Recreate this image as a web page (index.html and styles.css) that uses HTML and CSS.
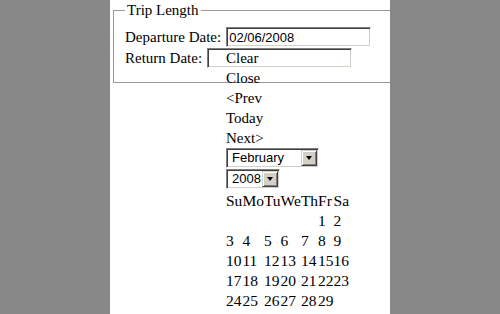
FILE: index.html
```html
<!DOCTYPE html>
<html lang="en">
<head>
<meta charset="utf-8">
<title>Trip Length</title>
<link rel="stylesheet" href="styles.css">
</head>
<body>
<div class="page">
  <form class="trip">
    <fieldset class="trip-fs">
      <legend class="trip-legend">Trip Length</legend>
      <div class="row">
        <label for="dep">Departure Date:</label>
        <input id="dep" class="date-input" type="text" value="02/06/2008">
      </div>
      <div class="row">
        <label for="ret">Return Date:</label>
        <input id="ret" class="date-input" type="text" value="">
      </div>
    </fieldset>
  </form>

  <div class="datepicker">
    <div class="dp-cmd">Clear</div>
    <div class="dp-cmd">Close</div>
    <div class="dp-cmd">&lt;Prev</div>
    <div class="dp-cmd">Today</div>
    <div class="dp-cmd">Next&gt;</div>
    <div class="dp-select month"><span class="dp-value">February</span><span class="dd-btn"></span></div>
    <div class="dp-select year"><span class="dp-value">2008</span><span class="dd-btn"></span></div>
    <table class="cal">
      <thead>
        <tr><td>Su</td><td>Mo</td><td>Tu</td><td>We</td><td>Th</td><td>Fr</td><td>Sa</td></tr>
      </thead>
      <tbody>
        <tr><td></td><td></td><td></td><td></td><td></td><td>1</td><td>2</td></tr>
        <tr><td>3</td><td>4</td><td>5</td><td>6</td><td>7</td><td>8</td><td>9</td></tr>
        <tr><td>10</td><td>11</td><td>12</td><td>13</td><td>14</td><td>15</td><td>16</td></tr>
        <tr><td>17</td><td>18</td><td>19</td><td>20</td><td>21</td><td>22</td><td>23</td></tr>
        <tr><td>24</td><td>25</td><td>26</td><td>27</td><td>28</td><td>29</td><td></td></tr>
      </tbody>
    </table>
  </div>
</div>
</body>
</html>
```
FILE: styles.css
```css
* {
  box-sizing: border-box;
}

html,
body {
  margin: 0;
  padding: 0;
}

body {
  background: #888888;
  color: #000;
  font-family: "Liberation Serif", "Times New Roman", serif;
  font-size: 15px;
  line-height: 20px;
}

.page {
  position: relative;
  width: 280px;
  min-height: 100vh;
  margin: 0 auto;
  background: #fff;
  overflow: hidden;
}

.trip {
  margin: 0;
}

.trip-fs {
  margin: 0 0 0 3px;
  padding: 6px 0 14px 11px;
  border: 1px solid #9a9a9a;
  border-right: none;
  min-width: 0;
}

.trip-legend {
  padding: 0 2px;
  line-height: 20px;
}

.row {
  display: flex;
  align-items: flex-end;
  gap: 4px;
  height: 21px;
}

.row label {
  line-height: 20px;
}

.date-input {
  width: 145px;
  height: 20px;
  margin: 0 0 0 1px;
  padding: 0 2px;
  font: 13px/16px "Liberation Sans", Arial, sans-serif;
  color: #000;
  background: #fff;
  border: 1px solid;
  border-color: #808080 #fff #fff #808080;
  box-shadow: inset 1px 1px 0 #404040, inset -1px -1px 0 #d4d0c8;
  outline: none;
}

.datepicker {
  position: absolute;
  left: 116px;
  top: 48px;
}

.dp-cmd {
  line-height: 20px;
  white-space: nowrap;
}

.dp-select {
  display: flex;
  align-items: center;
  justify-content: space-between;
  height: 20px;
  padding: 0 1px 0 5px;
  font: 13px/16px "Liberation Sans", Arial, sans-serif;
  background: #fff;
  border: 1px solid;
  border-color: #808080 #fff #fff #808080;
  box-shadow: inset 1px 1px 0 #404040, inset -1px -1px 0 #d4d0c8;
}

.month {
  width: 93px;
  margin-bottom: 1px;
}

.year {
  width: 54px;
  margin-bottom: 2px;
}

.dd-btn {
  display: flex;
  align-items: center;
  justify-content: center;
  width: 16px;
  height: 16px;
  background: #d4d0c8;
  border: 1px solid;
  border-color: #d4d0c8 #404040 #404040 #d4d0c8;
  box-shadow: inset 1px 1px 0 #fff, inset -1px -1px 0 #808080;
}

.dd-btn::after {
  content: "";
  width: 0;
  height: 0;
  border-left: 3.5px solid transparent;
  border-right: 3.5px solid transparent;
  border-top: 4px solid #000;
}

.cal {
  border-collapse: collapse;
  border-spacing: 0;
  font-size: 15.5px;
}

.cal td {
  padding: 0;
  line-height: 20px;
  text-align: left;
  white-space: nowrap;
}
```
